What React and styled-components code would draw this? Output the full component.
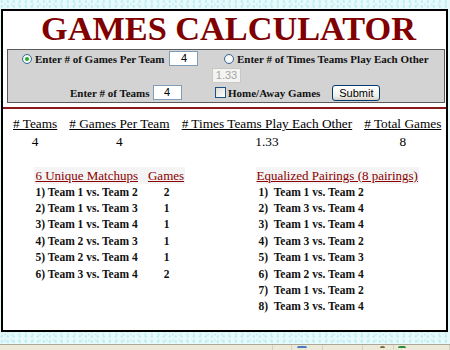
import React from "react";
import styled, { createGlobalStyle } from "styled-components";

const GlobalStyle = createGlobalStyle`
  html, body {
    margin: 0;
    padding: 0;
  }
  body {
    width: 450px;
    height: 350px;
    overflow: hidden;
    font-family: "Liberation Serif", "Times New Roman", serif;
    background:
      radial-gradient(circle at 30% 30%, #bfeef3 1px, transparent 1.6px) 0 0 / 6px 5px,
      radial-gradient(circle at 70% 75%, #cdf2f5 1px, transparent 1.6px) 0 0 / 7px 6px,
      #e8f9fb;
  }
`;

const Page = styled.div`
  display: flex;
  flex-direction: column;
  height: 350px;
`;

const Panel = styled.div`
  box-sizing: border-box;
  margin: 9px 0 0 1px;
  width: 447px;
  height: 323px;
  border: 2px solid #000;
  background: #fff;
`;

const Title = styled.h1`
  margin: 0;
  height: 34px;
  line-height: 35px;
  text-align: center;
  font-size: 34.3px;
  font-weight: bold;
  color: #800000;
  padding-left: 8px;
`;

const FormBox = styled.div`
  box-sizing: border-box;
  margin: 4px 1px 0 4px;
  height: 54px;
  border: 1px solid #5a5a5a;
  background: #d3d3d3;
  display: grid;
  grid-template-columns: 203px 1fr;
  grid-template-rows: 17px 17px 17px;
  align-items: center;
  font-size: 11px;
  font-weight: bold;
  color: #111;
`;

const Cell = styled.div`
  display: flex;
  align-items: center;
  gap: ${({ $gap }) => $gap || 3}px;
  padding-left: ${({ $indent }) => $indent || 0}px;
  grid-column: ${({ $col }) => $col};
  grid-row: ${({ $row }) => $row};
  white-space: nowrap;
`;

const Radio = styled.span`
  box-sizing: border-box;
  width: 10px;
  height: 10px;
  border-radius: 50%;
  border: 1px solid #3b6a9a;
  background: radial-gradient(circle, #fff 30%, #e4e4dc 100%);
  display: flex;
  align-items: center;
  justify-content: center;
  &::after {
    content: "";
    width: 4px;
    height: 4px;
    border-radius: 50%;
    background: ${({ $checked }) => ($checked ? "#1fae2a" : "transparent")};
  }
`;

const Check = styled.span`
  box-sizing: border-box;
  width: 11px;
  height: 11px;
  border: 1px solid #1c5180;
  background: linear-gradient(135deg, #dcdcd6, #fff);
`;

const TextInput = styled.span`
  box-sizing: border-box;
  width: 29px;
  height: 15px;
  border: 1px solid ${({ $disabled }) => ($disabled ? "#c9c9c2" : "#7f9db9")};
  background: ${({ $disabled }) => ($disabled ? "#f4f4f2" : "#fff")};
  color: ${({ $disabled }) => ($disabled ? "#a6a6a6" : "#000")};
  font-family: "Liberation Sans", Arial, sans-serif;
  font-weight: normal;
  font-size: 11px;
  line-height: 13px;
  text-align: center;
`;

const Submit = styled.span`
  box-sizing: border-box;
  margin-left: 10px;
  width: 48px;
  height: 16px;
  border: 1px solid #003c74;
  border-radius: 3px;
  background: linear-gradient(#ffffff, #f0f0ea 70%, #d6d0c5);
  font-family: "Liberation Sans", Arial, sans-serif;
  font-weight: normal;
  font-size: 11px;
  line-height: 14px;
  text-align: center;
  color: #000;
`;

const Rule = styled.div`
  margin-top: 4px;
  height: 2px;
  background: #8b1a1a;
`;

const Stats = styled.div`
  display: grid;
  grid-template-columns: repeat(4, auto);
  justify-content: start;
  column-gap: 12px;
  padding: 6px 0 0 10px;
  font-size: 13.3px;
  line-height: 18px;
  color: #000;
`;

const StatHead = styled.div`
  text-decoration: underline;
  text-align: center;
`;

const StatValue = styled.div`
  text-align: center;
`;

const Lists = styled.div`
  display: grid;
  grid-template-columns: 1fr 1fr;
  margin-top: 16px;
`;

const ListCol = styled.div`
  display: flex;
  justify-content: center;
  padding-left: ${({ $shift }) => $shift || 0}px;
  padding-right: ${({ $pull }) => $pull || 0}px;
`;

const ListTable = styled.div`
  display: grid;
  grid-template-columns: ${({ $cols }) => $cols};
  grid-auto-rows: 16.4px;
  align-items: center;
`;

const ListHead = styled.div`
  background: #f4f4f4;
  height: 17px;
  line-height: 17px;
  padding: 0 1px;
  font-size: 13px;
  color: #8b0000;
  text-decoration: underline;
  text-align: ${({ $center }) => ($center ? "center" : "left")};
  align-self: start;
`;

const HeadRow = styled.div`
  display: contents;
`;

const Item = styled.div`
  padding-left: ${({ $pad }) => $pad || 1}px;
  font-size: 11.5px;
  font-weight: bold;
  color: #111;
  white-space: pre;
  text-align: ${({ $center }) => ($center ? "center" : "left")};
`;

const Backdrop = styled.div`
  flex: 1;
`;

const StatusBar = styled.div`
  height: 5px;
  border-top: 1px solid #aca899;
  background: #ece9d8;
  display: flex;
`;

const StatusSlot = styled.div`
  width: ${({ $w }) => $w}px;
  border-right: 1px solid #d6d2c2;
  position: relative;
`;

const StatusIcon = styled.span`
  position: absolute;
  top: 1px;
  left: ${({ $x }) => $x}px;
  width: ${({ $w }) => $w || 8}px;
  height: 2px;
  background: ${({ $c }) => $c};
  border-radius: 2px 2px 0 0;
`;

const stats = [
  ["# Teams", "4"],
  ["# Games Per Team", "4"],
  ["# Times Teams Play Each Other", "1.33"],
  ["# Total Games", "8"],
];

const matchups = [
  ["1) Team 1 vs. Team 2", "2"],
  ["2) Team 1 vs. Team 3", "1"],
  ["3) Team 1 vs. Team 4", "1"],
  ["4) Team 2 vs. Team 3", "1"],
  ["5) Team 2 vs. Team 4", "1"],
  ["6) Team 3 vs. Team 4", "2"],
];

const pairings = [
  "1)  Team 1 vs. Team 2",
  "2)  Team 3 vs. Team 4",
  "3)  Team 1 vs. Team 4",
  "4)  Team 3 vs. Team 2",
  "5)  Team 1 vs. Team 3",
  "6)  Team 2 vs. Team 4",
  "7)  Team 1 vs. Team 2",
  "8)  Team 3 vs. Team 4",
];

export default function App() {
  return (
    <Page>
      <GlobalStyle />
      <Panel>
        <Title>GAMES CALCULATOR</Title>
        <FormBox>
          <Cell $col={1} $row={1} $indent={14}>
            <Radio $checked />
            <span>Enter # of Games Per Team</span>
            <TextInput style={{ marginLeft: 2 }}>4</TextInput>
          </Cell>
          <Cell $col={2} $row={1} $indent={13}>
            <Radio />
            <span>Enter # of Times Teams Play Each Other</span>
          </Cell>
          <Cell $col={2} $row={2} $indent={1}>
            <TextInput $disabled>1.33</TextInput>
          </Cell>
          <Cell $col={1} $row={3} $indent={62}>
            <span>Enter # of Teams</span>
            <TextInput>4</TextInput>
          </Cell>
          <Cell $col={2} $row={3} $indent={4} $gap={2}>
            <Check />
            <span>Home/Away Games</span>
            <Submit>Submit</Submit>
          </Cell>
        </FormBox>
        <Rule />
        <Stats>
          {stats.map(([h]) => (
            <StatHead key={h}>{h}</StatHead>
          ))}
          {stats.map(([h, v]) => (
            <StatValue key={h}>{v}</StatValue>
          ))}
        </Stats>
        <Lists>
          <ListCol $pull={8}>
            <ListTable $cols="auto auto">
              <HeadRow>
                <ListHead style={{ paddingRight: 9 }}>6 Unique Matchups</ListHead>
                <ListHead $center>Games</ListHead>
              </HeadRow>
              {matchups.map(([m, g]) => (
                <React.Fragment key={m}>
                  <Item>{m}</Item>
                  <Item $center>{g}</Item>
                </React.Fragment>
              ))}
            </ListTable>
          </ListCol>
          <ListCol $shift={4}>
            <ListTable $cols="auto">
              <ListHead>Equalized Pairings (8 pairings)</ListHead>
              {pairings.map((p) => (
                <Item key={p} $pad={3}>
                  {p}
                </Item>
              ))}
            </ListTable>
          </ListCol>
        </Lists>
      </Panel>
      <Backdrop />
      <StatusBar>
        <StatusSlot $w={276} />
        <StatusSlot $w={18} />
        <StatusSlot $w={30}>
          <StatusIcon $x={5} $w={10} $c="#4a78c8" />
        </StatusSlot>
        <StatusSlot $w={40} />
        <StatusSlot $w={30}>
          <StatusIcon $x={17} $w={5} $c="#7a6a3a" />
        </StatusSlot>
        <StatusSlot $w={56}>
          <StatusIcon $x={4} $w={8} $c="#2e8b3a" />
        </StatusSlot>
      </StatusBar>
    </Page>
  );
}
